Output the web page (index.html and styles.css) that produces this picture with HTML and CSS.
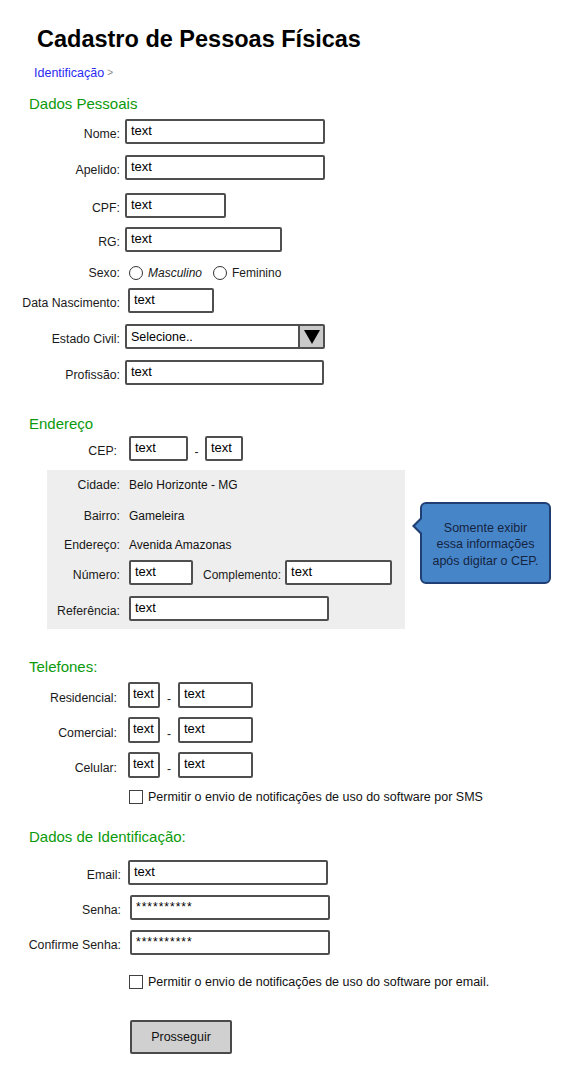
FILE: index.html
```html
<!DOCTYPE html>
<html lang="pt">
<head>
<meta charset="utf-8">
<title>Cadastro de Pessoas Físicas</title>
<link rel="stylesheet" href="styles.css">
</head>
<body>
<main class="page">
  <h1 class="title">Cadastro de Pessoas Físicas</h1>
  <nav class="crumb"><span class="crumb-link">Identificação</span><span class="crumb-sep">&gt;</span></nav>

  <section class="sec sec-personal">
    <h2 class="sec-title">Dados Pessoais</h2>
    <div class="form">
      <div class="row"><span class="lbl">Nome:</span><div class="input w200">text</div></div>
      <div class="row"><span class="lbl">Apelido:</span><div class="input w200">text</div></div>
      <div class="row row-cpf"><span class="lbl">CPF:</span><div class="input w101">text</div></div>
      <div class="row"><span class="lbl">RG:</span><div class="input w157">text</div></div>
      <div class="row row-sexo">
        <span class="lbl">Sexo:</span>
        <div class="radios">
          <span class="radio"></span><span class="opt opt-first">Masculino</span>
          <span class="radio"></span><span class="opt">Feminino</span>
        </div>
      </div>
      <div class="row"><span class="lbl">Data Nascimento:</span><div class="input w86 shift3">text</div></div>
      <div class="row"><span class="lbl">Estado Civil:</span>
        <div class="select">
          <span class="select-text">Selecione..</span>
          <span class="select-btn"><svg width="16" height="14" viewBox="0 0 16 14"><polygon points="0,0 16,0 8,14" fill="#000"/></svg></span>
        </div>
      </div>
      <div class="row"><span class="lbl">Profissão:</span><div class="input w199">text</div></div>
    </div>
  </section>

  <section class="sec sec-address">
    <h2 class="sec-title">Endereço</h2>
    <div class="form">
      <div class="row row-cep"><span class="lbl">CEP:</span><div class="input w59">text</div><span class="dash dash-cep">-</span><div class="input w38">text</div></div>
    </div>
    <div class="panel">
      <div class="trow"><span class="lbl">Cidade:</span><span class="val">Belo Horizonte - MG</span></div>
      <div class="trow trow-bairro"><span class="lbl">Bairro:</span><span class="val">Gameleira</span></div>
      <div class="trow trow-end"><span class="lbl">Endereço:</span><span class="val">Avenida Amazonas</span></div>
      <div class="row row-num"><span class="lbl">Número:</span><div class="input w64">text</div><span class="lbl-inline">Complemento:</span><div class="input w107">text</div></div>
      <div class="row row-ref"><span class="lbl">Referência:</span><div class="input w200">text</div></div>
      <div class="callout">
        <p class="callout-text">Somente exibir<br>essa informações<br>após digitar o CEP.</p>
      </div>
    </div>
  </section>

  <section class="sec sec-phones">
    <h2 class="sec-title">Telefones:</h2>
    <div class="form">
      <div class="row row-phone"><span class="lbl">Residencial:</span><div class="input w32 h26">text</div><span class="dash">-</span><div class="input w75 h26">text</div></div>
      <div class="row row-phone"><span class="lbl">Comercial:</span><div class="input w32 h26">text</div><span class="dash">-</span><div class="input w75 h26">text</div></div>
      <div class="row row-phone"><span class="lbl">Celular:</span><div class="input w32 h26">text</div><span class="dash">-</span><div class="input w75 h26">text</div></div>
    </div>
    <div class="check check-sms"><span class="box"></span><span class="check-text">Permitir o envio de notificações de uso do software por SMS</span></div>
  </section>

  <section class="sec sec-ident">
    <h2 class="sec-title">Dados de Identificação:</h2>
    <div class="form">
      <div class="row"><span class="lbl">Email:</span><div class="input w200">text</div></div>
      <div class="row"><span class="lbl">Senha:</span><div class="input w200 shift2 pwd">**********</div></div>
      <div class="row row-conf"><span class="lbl">Confirme Senha:</span><div class="input w200 shift2 pwd">**********</div></div>
    </div>
    <div class="check check-email"><span class="box"></span><span class="check-text">Permitir o envio de notificações de uso do software por email.</span></div>
    <button class="btn" type="button">Prosseguir</button>
  </section>
</main>
</body>
</html>
```

FILE: styles.css
```css
* { box-sizing: border-box; }

body {
  margin: 0;
  background: #fff;
  color: #1a1a1a;
  font-family: "Liberation Sans", Arial, sans-serif;
}

.page {
  width: 570px;
  padding-top: 25px;
  padding-bottom: 20px;
}

.title {
  margin: 0 0 0 37px;
  font-size: 23.5px;
  line-height: 28px;
  font-weight: bold;
  color: #000;
}

.crumb {
  margin: 12px 0 0 34px;
  height: 16px;
  font-size: 12.5px;
  line-height: 16px;
  display: flex;
  align-items: center;
}
.crumb-link { color: #2a2af2; }
.crumb-sep { color: #8a8a8a; margin-left: 3px; font-size: 10px; line-height: 16px; }

.sec-title {
  margin: 0;
  padding-left: 29px;
  font-size: 15px;
  line-height: 18px;
  font-weight: normal;
  color: #0b9a0b;
}

.form {
  display: flex;
  flex-direction: column;
}

.row {
  display: flex;
  align-items: flex-end;
}

.lbl {
  flex: none;
  width: var(--lw);
  margin-right: var(--gap);
  text-align: right;
  font-size: 12.3px;
  line-height: 15px;
  padding-bottom: 2px;
  color: #1a1a1a;
  white-space: nowrap;
}

.input {
  flex: none;
  height: 25px;
  border: 2px solid #4f4f4f;
  border-radius: 2px;
  background: #fff;
  padding: 2px 0 0 4px;
  font-size: 13px;
  line-height: 16px;
  color: #000;
  overflow: hidden;
  white-space: nowrap;
}
.w32 { width: 32px; padding-left: 3px; }
.w38 { width: 38px; }
.w59 { width: 59px; }
.w64 { width: 64px; }
.w75 { width: 75px; }
.w86 { width: 86px; }
.w101 { width: 101px; }
.w107 { width: 107px; }
.w157 { width: 157px; }
.w199 { width: 199px; }
.w200 { width: 200px; }
.h26 { height: 26px; }
.shift2 { margin-left: 2px; }
.shift3 { margin-left: 3px; }
.pwd { letter-spacing: 1px; font-size: 12px; }

/* Personal */
.sec-personal { margin-top: 14px; --lw: 120px; --gap: 5px; }
.sec-personal .form { margin-top: 6px; gap: 11px; }
.row-cpf { margin-top: 2px; margin-bottom: -2px; }

.row-sexo {
  align-items: center;
  height: 14px;
  margin-top: 3px;
  margin-bottom: -3px;
}
.row-sexo .lbl { padding-bottom: 0; line-height: 14px; }
.radios { display: flex; align-items: center; margin-left: 4px; height: 14px; }
.radio {
  width: 14px;
  height: 14px;
  border: 1.5px solid #333;
  border-radius: 50%;
  background: #fff;
  flex: none;
}
.opt { font-size: 12px; line-height: 14px; margin-left: 5px; }
.opt-first { margin-right: 11px; font-style: italic; }

.select {
  flex: none;
  width: 200px;
  height: 25px;
  border: 2px solid #4f4f4f;
  border-radius: 2px;
  display: flex;
  align-items: stretch;
  background: #fff;
}
.select-text {
  font-size: 12.5px;
  line-height: 16px;
  padding: 3px 0 0 4px;
  color: #000;
}
.select-btn {
  margin-left: auto;
  width: 25px;
  background: #c9c9c9;
  border-left: 2px solid #4f4f4f;
  display: flex;
  align-items: center;
  justify-content: center;
}

/* Address */
.sec-address { margin-top: 30px; --lw: 117px; --gap: 12px; }
.row-cep { margin-top: 3px; }
.dash {
  flex: none;
  width: 18px;
  text-align: center;
  font-size: 12px;
  line-height: 15px;
  padding-bottom: 1px;
}
.dash-cep { width: 17px; }

.panel {
  position: relative;
  margin: 9px 0 0 47px;
  width: 358px;
  height: 159px;
  background: #eeeeee;
  padding-top: 7px;
  --lw: 73px;
  --gap: 9px;
  display: flex;
  flex-direction: column;
}
.trow {
  display: flex;
  align-items: baseline;
  height: 16px;
}
.trow .lbl { padding-bottom: 0; line-height: 16px; }
.val { font-size: 12px; line-height: 16px; color: #111; }
.trow-bairro { margin-top: 15px; }
.trow-end { margin-top: 13px; }
.row-num { margin-top: 7px; }
.row-ref { margin-top: 11px; }
.lbl-inline {
  font-size: 12px;
  line-height: 15px;
  padding-bottom: 2px;
  margin: 0 4px 0 10px;
  white-space: nowrap;
}

.callout {
  position: absolute;
  left: 373px;
  top: 32px;
  width: 131px;
  height: 82px;
  background: #4785c9;
  border: 2px solid #1f3e74;
  border-radius: 6px;
  display: flex;
  align-items: center;
  justify-content: center;
  padding-top: 3px;
}
.callout::before {
  content: "";
  position: absolute;
  left: -10px;
  top: 12px;
  border-style: solid;
  border-width: 10px 10px 10px 0;
  border-color: transparent #1f3e74 transparent transparent;
}
.callout::after {
  content: "";
  position: absolute;
  left: -7px;
  top: 14px;
  border-style: solid;
  border-width: 8px 8px 8px 0;
  border-color: transparent #4785c9 transparent transparent;
}
.callout-text {
  margin: 0;
  text-align: center;
  font-size: 12.5px;
  line-height: 16.5px;
  color: #14243f;
}

/* Phones */
.sec-phones { margin-top: 29px; --lw: 117px; --gap: 11px; }
.sec-phones .form { margin-top: 6px; gap: 9px; }

.check {
  display: flex;
  align-items: center;
  margin-left: 129px;
  height: 14px;
}
.box {
  flex: none;
  width: 14px;
  height: 14px;
  border: 1.5px solid #404040;
  background: #fff;
}
.check-text {
  margin-left: 5px;
  font-size: 12.5px;
  line-height: 15px;
  white-space: nowrap;
  color: #111;
}
.check-sms { margin-top: 12px; }

/* Identification */
.sec-ident { margin-top: 24px; --lw: 121px; --gap: 7px; }
.sec-ident .form { margin-top: 14px; gap: 10px; }
.check-email { margin-top: 20px; }

.btn {
  display: block;
  margin: 31px 0 0 130px;
  width: 102px;
  height: 34px;
  background: #d0d0d0;
  border: 2px solid #4a4a4a;
  border-radius: 2px;
  font-family: "Liberation Sans", Arial, sans-serif;
  font-size: 12.5px;
  color: #111;
  padding: 0;
}
```
